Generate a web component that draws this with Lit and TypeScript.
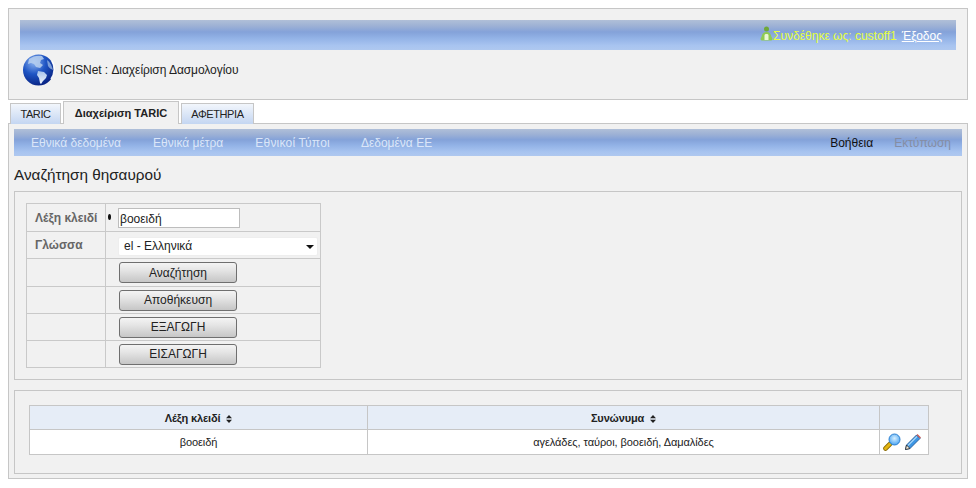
import { LitElement, html, css, svg } from "lit";
import { customElement } from "lit/decorators.js";

const sortIcon = svg`<svg class="sort" width="6" height="8" viewBox="0 0 6 8"><path d="M3 0L6 3.200H0zM3 8L0 4.800h6z" fill="#222"/></svg>`;

@customElement("app-root")
export class AppRoot extends LitElement {
  static styles = css`
    :host { display: block; width: 976px; height: 488px; box-sizing: border-box; padding: 8px 8px 0; background: #fff; font-family: "Liberation Sans", Arial, sans-serif; font-size: 12px; color: #222; overflow: hidden; }
    * { box-sizing: border-box; }
    .top { height: 92px; border: 1px solid #c6c6c6; background: #f1f1f1; padding: 11px 11px 0; }
    .bar { background: linear-gradient(#b0bfd8 0, #9db1d5 20%, #84a2d9 40%, #92b2e6 60%, #a8c4f0 85%, #afc8ef 100%); display: flex; align-items: center; }
    .top .bar { height: 30px; justify-content: flex-end; padding: 2px 14px 0 0; gap: 5px; }
    .who { color: #e6ff3a; display: flex; align-items: center; gap: 0; }
    .who svg { margin-top: -5px; }
    .logout { color: #fff; text-decoration: underline; }
    .brand { display: flex; align-items: center; gap: 5px; padding: 3px 0 0 3px; letter-spacing: -0.06px; }
    .tabs { display: flex; height: 24px; padding: 1px 0 0 2px; gap: 2px; align-items: flex-end; margin-bottom: -1px; position: relative; z-index: 1; }
    .tab { height: 21px; border: 1px solid #c6c6c6; border-bottom: 0; display: flex; align-items: center; justify-content: center; font-size: 11px; background: linear-gradient(#f2f6fc, #c4d6f2); }
    .tab.t1 { width: 51px; letter-spacing: -0.4px; }
    .tab.t2 { width: 116px; height: 23px; background: #f1f1f1; font-weight: bold; }
    .tab.t3 { width: 73px; letter-spacing: -0.4px; }
    .main { height: 356px; border: 1px solid #c6c6c6; background: #f1f1f1; padding: 5px; }
    .sub { height: 27px; justify-content: space-between; padding: 0 11px 0 17px; color: #dbe6f8; }
    .sub .l, .sub .r { display: flex; gap: 32px; }
    .sub .l span:nth-child(3) { letter-spacing: 0.2px; }
    .sub .l span:nth-child(4) { margin-left: -1px; }
    .sub .r { gap: 21px; }
    .help { color: #111; }
    .print { color: #858da3; }
    h1 { font: 400 15.300px "Liberation Sans", Arial, sans-serif; color: #222; margin: 0; height: 35px; padding-top: 3px; display: flex; align-items: center; }
    .panel { border: 1px solid #c6c6c6; }
    .p1 { height: 189px; padding: 11px; }
    .p2 { height: 84px; margin-top: 10px; padding: 14px 14px 0; }
    table { border-collapse: collapse; table-layout: fixed; }
    .form { width: 295px; }
    .form td { border: 1px solid #c9c9c9; padding: 0; height: 27px; }
    .form tr:nth-child(odd) td { height: 28px; }
    .form tr:nth-child(5) td { height: 27px; }
    .form .lab { width: 79px; font-weight: bold; color: #666; padding-left: 8px; }
    .form tr:nth-child(2) .lab { vertical-align: top; padding-top: 6px; }
    .fld { display: flex; align-items: center; padding: 1px 0 0 2px; }
    .dot { width: 3px; height: 6px; border-radius: 50%; background: #111; margin: -2px 7px 0 0; }
    .input { width: 122px; height: 20px; background: #fff; border: 1px solid #bdbdbd; padding: 1px 0 0 1px; display: flex; align-items: center; color: #222; }
    .select { width: 200px; height: 19px; background: #fff; margin: 2px 0 0 12px; padding: 0 3px 0 0; display: flex; align-items: center; justify-content: space-between; border: 1px solid #eee; border-radius: 2px; }
    .select span { padding-left: 5px; }
    .arrow { width: 0; height: 0; border: 4px solid transparent; border-top: 4px solid #111; border-bottom: 0; margin-top: 2px; }
    .btn { display: flex; align-items: center; justify-content: center; width: 118px; height: 21px; margin-left: 13px; border: 1px solid #6f6f6f; border-radius: 3px; background: linear-gradient(#f4f4f4, #e6e6e6 35%, #c6c6c6); color: #222; }
    .res { width: 899px; }
    .res th, .res td { border: 1px solid #c6c6c6; padding: 0; text-align: center; font-size: 11px; }
    .res th { height: 24px; background: #e6edf7; font-weight: bold; letter-spacing: -0.15px; }
    .res td { height: 25px; background: #fff; padding-bottom: 1px; letter-spacing: -0.06px; }
    .res .c1 { width: 338px; }
    .res .c2 { width: 512px; }
    .res .c3 { width: 49px; }
    .sort { margin-left: 3px; vertical-align: -1px; }
    .icons { display: flex; align-items: center; gap: 3px; padding: 1px 0 0 3px; }
  `;

  private globe() {
    return svg`<svg width="32" height="33" viewBox="0 0 32 33">
      <defs><radialGradient id="g" cx="35%" cy="25%" r="85%"><stop offset="0" stop-color="#8db4f0"/><stop offset=".45" stop-color="#1f55c4"/><stop offset="1" stop-color="#041a78"/></radialGradient>
      <linearGradient id="land" x1="0" y1="0" x2="0" y2="1"><stop offset="0" stop-color="#a6c2ea"/><stop offset="1" stop-color="#f2f6fc"/></linearGradient></defs>
      <circle cx="15.500" cy="17" r="15.500" fill="url(#g)"/>
      <path d="M6 6c4-3 9-4 13-3l2 3-3 1-1 3 3 2-3 3-4-1-2-3-3-1-3 1z" fill="#b9d0ef" opacity=".85"/>
      <path d="M15 18l6 1 3 3-1 3-3 3-2 3-1-1-1-5-2-3z" fill="url(#land)"/>
      <path d="M24 7c3 2 5 6 6 10-2-1-4-2-5-4z" fill="#a8c4ea" opacity=".7"/>
      <path d="M29 8c3 5 3 13-1 18" fill="none" stroke="#fff" stroke-width="1.600" opacity=".9"/>
    </svg>`;
  }

  private user() {
    return svg`<svg width="13" height="15" viewBox="0 0 13 15">
      <circle cx="6.500" cy="3" r="2.500" fill="#6fa838"/>
      <path d="M1.500 14.500c-1.500-1-1-2.500 0-3.500 .5-3 2-5 5-5s4.500 2 5 5c1 1 1.500 2.500 0 3.500z" fill="#8ecb52"/>
      <path d="M4.500 14V9c0-1.500 4-1.500 4 0v5z" fill="#eaf8d4"/>
    </svg>`;
  }

  private search() {
    return svg`<svg width="18" height="18" viewBox="0 0 18 18">
      <defs><radialGradient id="lens" cx="50%" cy="40%" r="60%"><stop offset="0" stop-color="#d8f0ff"/><stop offset="1" stop-color="#4aa4f2"/></radialGradient></defs>
      <path d="M2.500 15.500l4.500-4.500" stroke="#8a6a00" stroke-width="4.600" stroke-linecap="round"/>
      <path d="M2.500 15.500l4.500-4.500" stroke="#e3b512" stroke-width="3" stroke-linecap="round"/>
      <circle cx="11.500" cy="6.500" r="5.500" fill="url(#lens)" stroke="#2b7fd0" stroke-width="1"/>
    </svg>`;
  }

  private pencil() {
    return svg`<svg width="18" height="18" viewBox="0 0 18 18">
      <path d="M1.500 16.500l1-4.500L12.500 2l3.500 3.500L6 15.500z" fill="#3d96e4" stroke="#1a4f8c" stroke-width=".8" stroke-linejoin="round"/>
      <path d="M4 12.500L13 3.500" stroke="#a6d6fa" stroke-width="1.300"/>
      <path d="M1.500 16.500l1-4.500 3.500 3.500z" fill="#f6ecd8" stroke="#222" stroke-width=".8" stroke-linejoin="round"/>
      <path d="M12.500 2l1-1 3.500 3.500-1 1z" fill="#c05a5a"/>
    </svg>`;
  }

  render() {
    const buttons = ["Αναζήτηση", "Αποθήκευση", "ΕΞΑΓΩΓΗ", "ΕΙΣΑΓΩΓΗ"];
    return html`
      <div class="top">
        <div class="bar">
          <span class="who">${this.user()}Συνδέθηκε ως: custoff1</span>
          <span class="logout">Έξοδος</span>
        </div>
        <div class="brand">${this.globe()}<span>ICISNet : Διαχείριση Δασμολογίου</span></div>
      </div>
      <div class="tabs">
        <div class="tab t1">TARIC</div>
        <div class="tab t2">Διαχείριση TARIC</div>
        <div class="tab t3">ΑΦΕΤΗΡΙΑ</div>
      </div>
      <div class="main">
        <div class="bar sub">
          <div class="l"><span>Εθνικά δεδομένα</span><span>Εθνικά μέτρα</span><span>Εθνικοί Τύποι</span><span>Δεδομένα ΕΕ</span></div>
          <div class="r"><span class="help">Βοήθεια</span><span class="print">Εκτύπωση</span></div>
        </div>
        <h1>Αναζήτηση θησαυρού</h1>
        <div class="panel p1">
          <table class="form">
            <tr><td class="lab">Λέξη κλειδί</td><td><div class="fld"><span class="dot"></span><div class="input">βοοειδή</div></div></td></tr>
            <tr><td class="lab">Γλώσσα</td><td><div class="select"><span>el - Ελληνικά</span><i class="arrow"></i></div></td></tr>
            ${buttons.map((b) => html`<tr><td class="lab"></td><td><div class="btn">${b}</div></td></tr>`)}
          </table>
        </div>
        <div class="panel p2">
          <table class="res">
            <tr><th class="c1">Λέξη κλειδί ${sortIcon}</th><th class="c2">Συνώνυμα ${sortIcon}</th><th class="c3"></th></tr>
            <tr><td>βοοειδή</td><td>αγελάδες, ταύροι, βοοειδή, Δαμαλίδες</td><td><div class="icons">${this.search()}${this.pencil()}</div></td></tr>
          </table>
        </div>
      </div>
    `;
  }
}
